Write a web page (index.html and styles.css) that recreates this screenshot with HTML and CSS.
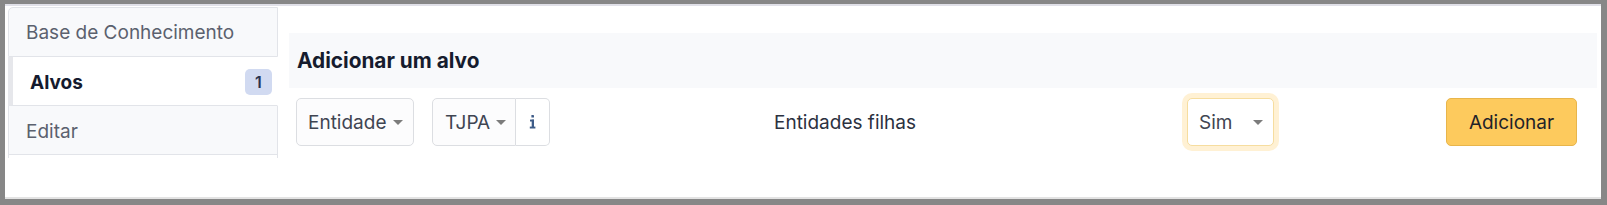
FILE: index.html
```html
<!DOCTYPE html>
<html lang="pt">
<head>
<meta charset="utf-8">
<title>Alvos</title>
<link rel="stylesheet" href="styles.css">
</head>
<body>
<div class="frame">
  <div class="inner">
    <nav class="tabs">
      <div class="tab">Base de Conhecimento</div>
      <div class="tab active"><span>Alvos</span><span class="badge">1</span></div>
      <div class="tab">Editar</div>
      <div class="tab-rest"></div>
    </nav>
    <main class="panel">
      <div class="band"><h2 class="title">Adicionar um alvo</h2></div>
      <div class="controls">
        <div class="cell">
          <div class="select sel-entidade"><span>Entidade</span><svg class="caret" width="10" height="5" viewBox="0 0 10 5"><path d="M0 0H10L5 5Z"/></svg></div>
        </div>
        <div class="cell">
          <div class="group">
            <div class="select sel-tjpa"><span>TJPA</span><svg class="caret" width="10" height="5" viewBox="0 0 10 5"><path d="M0 0H10L5 5Z"/></svg></div>
            <div class="info"><svg width="7" height="14" viewBox="0 0 7 14"><rect x="2.4" y="0" width="2.6" height="2.6" rx="0.4"/><rect x="1" y="4.6" width="4" height="1.9"/><rect x="2.7" y="4.6" width="2.3" height="8"/><rect x="0.8" y="11.6" width="5.6" height="1.9"/></svg></div>
          </div>
        </div>
        <div class="cell label">Entidades filhas</div>
        <div class="cell">
          <div class="select sel-sim"><span>Sim</span><svg class="caret" width="10" height="5" viewBox="0 0 10 5"><path d="M0 0H10L5 5Z"/></svg></div>
        </div>
        <div class="cell end">
          <button class="btn">Adicionar</button>
        </div>
      </div>
    </main>
  </div>
</div>
</body>
</html>
```

FILE: styles.css
```css
* { box-sizing: border-box; }
html, body { margin: 0; padding: 0; background: #ffffff; }
body { font-family: Inter, "Noto Sans", sans-serif; }

.frame {
  width: 1607px;
  height: 205px;
  border-style: solid;
  border-color: #878787;
  border-width: 4px 6px 6px 5px;
  background: #ffffff;
}
.inner {
  height: 100%;
  display: flex;
  border-top: 2px solid #e0e0e8;
  border-bottom: 2px solid #e3e3e3;
  padding: 1px 4px 0 3px;
}

/* tabs */
.tabs {
  width: 270px;
  flex: none;
  display: flex;
  flex-direction: column;
}
.tab {
  height: 49px;
  display: flex;
  align-items: center;
  justify-content: space-between;
  padding: 0 5px 0 17px;
  background: #f8f9fb;
  border: 1px solid #e2e4e9;
  border-top: none;
  font-size: 19px;
  color: #5b616e;
}
.tab:first-child {
  height: 50px;
  border-top: 1px solid #e2e4e9;
  border-top-left-radius: 5px;
}
.tab:nth-child(3) { padding-top: 2px; }
.tab.active {
  background: #ffffff;
  border-left: 5px solid #e6e7eb;
  border-right-color: #ffffff;
  padding-left: 17px;
  padding-top: 2px;
  font-weight: 700;
  color: #151b2e;
}
.badge {
  width: 27px;
  height: 26px;
  border-radius: 5px;
  background: #d1daf1;
  color: #2a3250;
  font-size: 16px;
  font-weight: 600;
  display: flex;
  align-items: center;
  justify-content: center;
}
.tab-rest {
  height: 3px;
  border-left: 1px solid #e2e4e9;
  border-right: 1px solid #e2e4e9;
}

/* main panel */
.panel {
  flex: 1;
  padding: 26px 0 0 11px;
}
.band {
  height: 55px;
  background: #f8f9fb;
  display: flex;
  align-items: center;
  padding-left: 8px;
}
.title {
  margin: 0;
  font-size: 20.8px;
  font-weight: 700;
  color: #161c2e;
}

.controls {
  margin-top: 10px;
  height: 48px;
  padding: 0 20px 0 7px;
  display: grid;
  grid-template-columns: 136px 342px 413px 1fr auto;
  align-items: center;
}
.cell { display: flex; align-items: center; }
.cell.end { justify-content: flex-end; }
.label {
  font-size: 19px;
  color: #2b3140;
}

.select {
  height: 48px;
  display: flex;
  align-items: center;
  justify-content: space-between;
  border: 1px solid #dcdee2;
  border-radius: 5px;
  background: #fcfcfd;
  font-size: 19px;
  color: #3f4552;
}
.caret { fill: #7c7c7c; flex: none; }
.sel-entidade { width: 118px; padding: 0 10px 0 11px; }

.group { display: flex; }
.sel-tjpa {
  width: 84px;
  padding: 0 9px 0 12px;
  border-radius: 5px 0 0 5px;
}
.info {
  width: 34px;
  height: 48px;
  border: 1px solid #dcdee2;
  border-left: none;
  border-radius: 0 5px 5px 0;
  background: #ffffff;
  display: flex;
  align-items: center;
  justify-content: center;
}
.info svg { fill: #3e5c88; }

.sel-sim {
  width: 87px;
  padding: 0 10px 0 11px;
  border-color: #f6dd9f;
  background: #ffffff;
  box-shadow: 0 0 0 5px #fff1d4;
}

.btn {
  width: 131px;
  height: 48px;
  border: 1px solid #e8b54b;
  border-radius: 5px;
  background: #fdca5d;
  color: #1f2329;
  font-family: Inter, "Noto Sans", sans-serif;
  font-size: 19px;
  padding: 0;
}
```
